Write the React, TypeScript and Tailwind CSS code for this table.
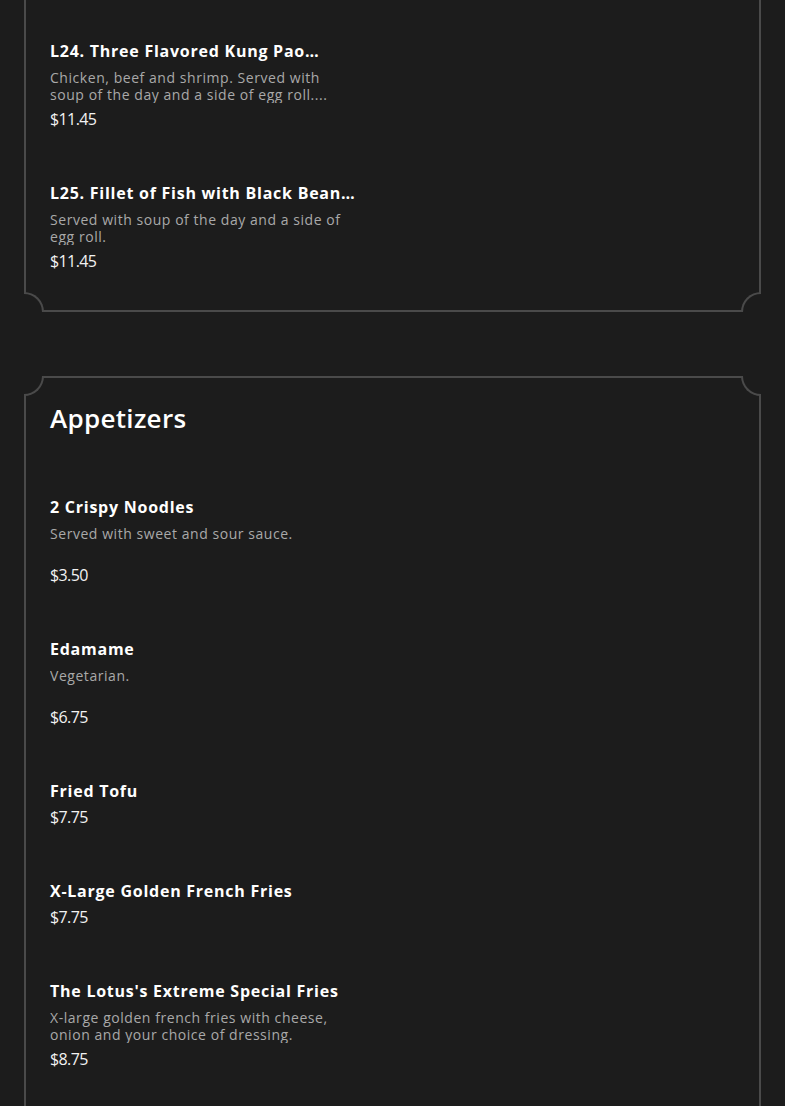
import React from "react";

type Item = { name: string; desc?: React.ReactNode; price: string };

const font = { fontFamily: '"Open Sans", "Noto Sans", sans-serif' };

function MenuItem({ item }: { item: Item }) {
  return (
    <div className="w-[300px]">
      <div className="whitespace-nowrap text-[16px] font-bold leading-[20px] tracking-[0.75px] text-white">
        {item.name}
      </div>
      {item.desc && (
        <div className="mt-2 h-[34px] overflow-hidden whitespace-nowrap text-[14px] leading-[17px] tracking-[0.55px] text-[#a9a9a9]">
          {item.desc}
        </div>
      )}
      <div className="mt-1 text-[16px] leading-[24px] tracking-[-0.6px] text-[#f2f2f2]">{item.price}</div>
    </div>
  );
}

function Corner({ pos }: { pos: "tl" | "tr" | "bl" | "br" }) {
  const cls = {
    tl: "top-[-2px] left-[-2px] border-r-2 border-b-2 rounded-br-[20px]",
    tr: "top-[-2px] right-[-2px] border-l-2 border-b-2 rounded-bl-[20px]",
    bl: "bottom-[-2px] left-[-2px] border-r-2 border-t-2 rounded-tr-[20px]",
    br: "bottom-[-2px] right-[-2px] border-l-2 border-t-2 rounded-tl-[20px]",
  }[pos];
  return <div className={`absolute h-[20px] w-[20px] border-[#4a4a4a] bg-[#1c1c1c] ${cls}`} />;
}

const lunch: Item[] = [
  {
    name: "L24. Three Flavored Kung Pao…",
    desc: (
      <>
        Chicken, beef and shrimp. Served with
        <br />
        soup of the day and a side of egg roll....
      </>
    ),
    price: "$11.45",
  },
  {
    name: "L25. Fillet of Fish with Black Bean…",
    desc: (
      <>
        Served with soup of the day and a side of
        <br />
        egg roll.
      </>
    ),
    price: "$11.45",
  },
];

const appetizers: Item[] = [
  { name: "2 Crispy Noodles", desc: "Served with sweet and sour sauce.", price: "$3.50" },
  { name: "Edamame", desc: "Vegetarian.", price: "$6.75" },
  { name: "Fried Tofu", price: "$7.75" },
  { name: "X-Large Golden French Fries", price: "$7.75" },
  {
    name: "The Lotus's Extreme Special Fries",
    desc: (
      <>
        X-large golden french fries with cheese,
        <br />
        onion and your choice of dressing.
      </>
    ),
    price: "$8.75",
  },
];

export default function App() {
  return (
    <div className="h-[1106px] w-full overflow-hidden bg-[#1c1c1c] px-6" style={font}>
      <div className="relative border-x-2 border-b-2 border-[#4a4a4a] px-6 pb-[37px] pt-[41px]">
        <div className="flex flex-col gap-[52px]">
          {lunch.map((it) => (
            <MenuItem key={it.name} item={it} />
          ))}
        </div>
        <Corner pos="bl" />
        <Corner pos="br" />
      </div>

      <div className="relative mt-16 h-[760px] border-2 border-[#4a4a4a] px-6 pt-6">
        <h2 className="mb-[63px] text-[26px] font-semibold leading-[32px] tracking-[0.3px] text-white">
          Appetizers
        </h2>
        <div className="flex flex-col gap-[52px]">
          {appetizers.map((it) => (
            <MenuItem key={it.name} item={it} />
          ))}
        </div>
        <Corner pos="tl" />
        <Corner pos="tr" />
      </div>
    </div>
  );
}
